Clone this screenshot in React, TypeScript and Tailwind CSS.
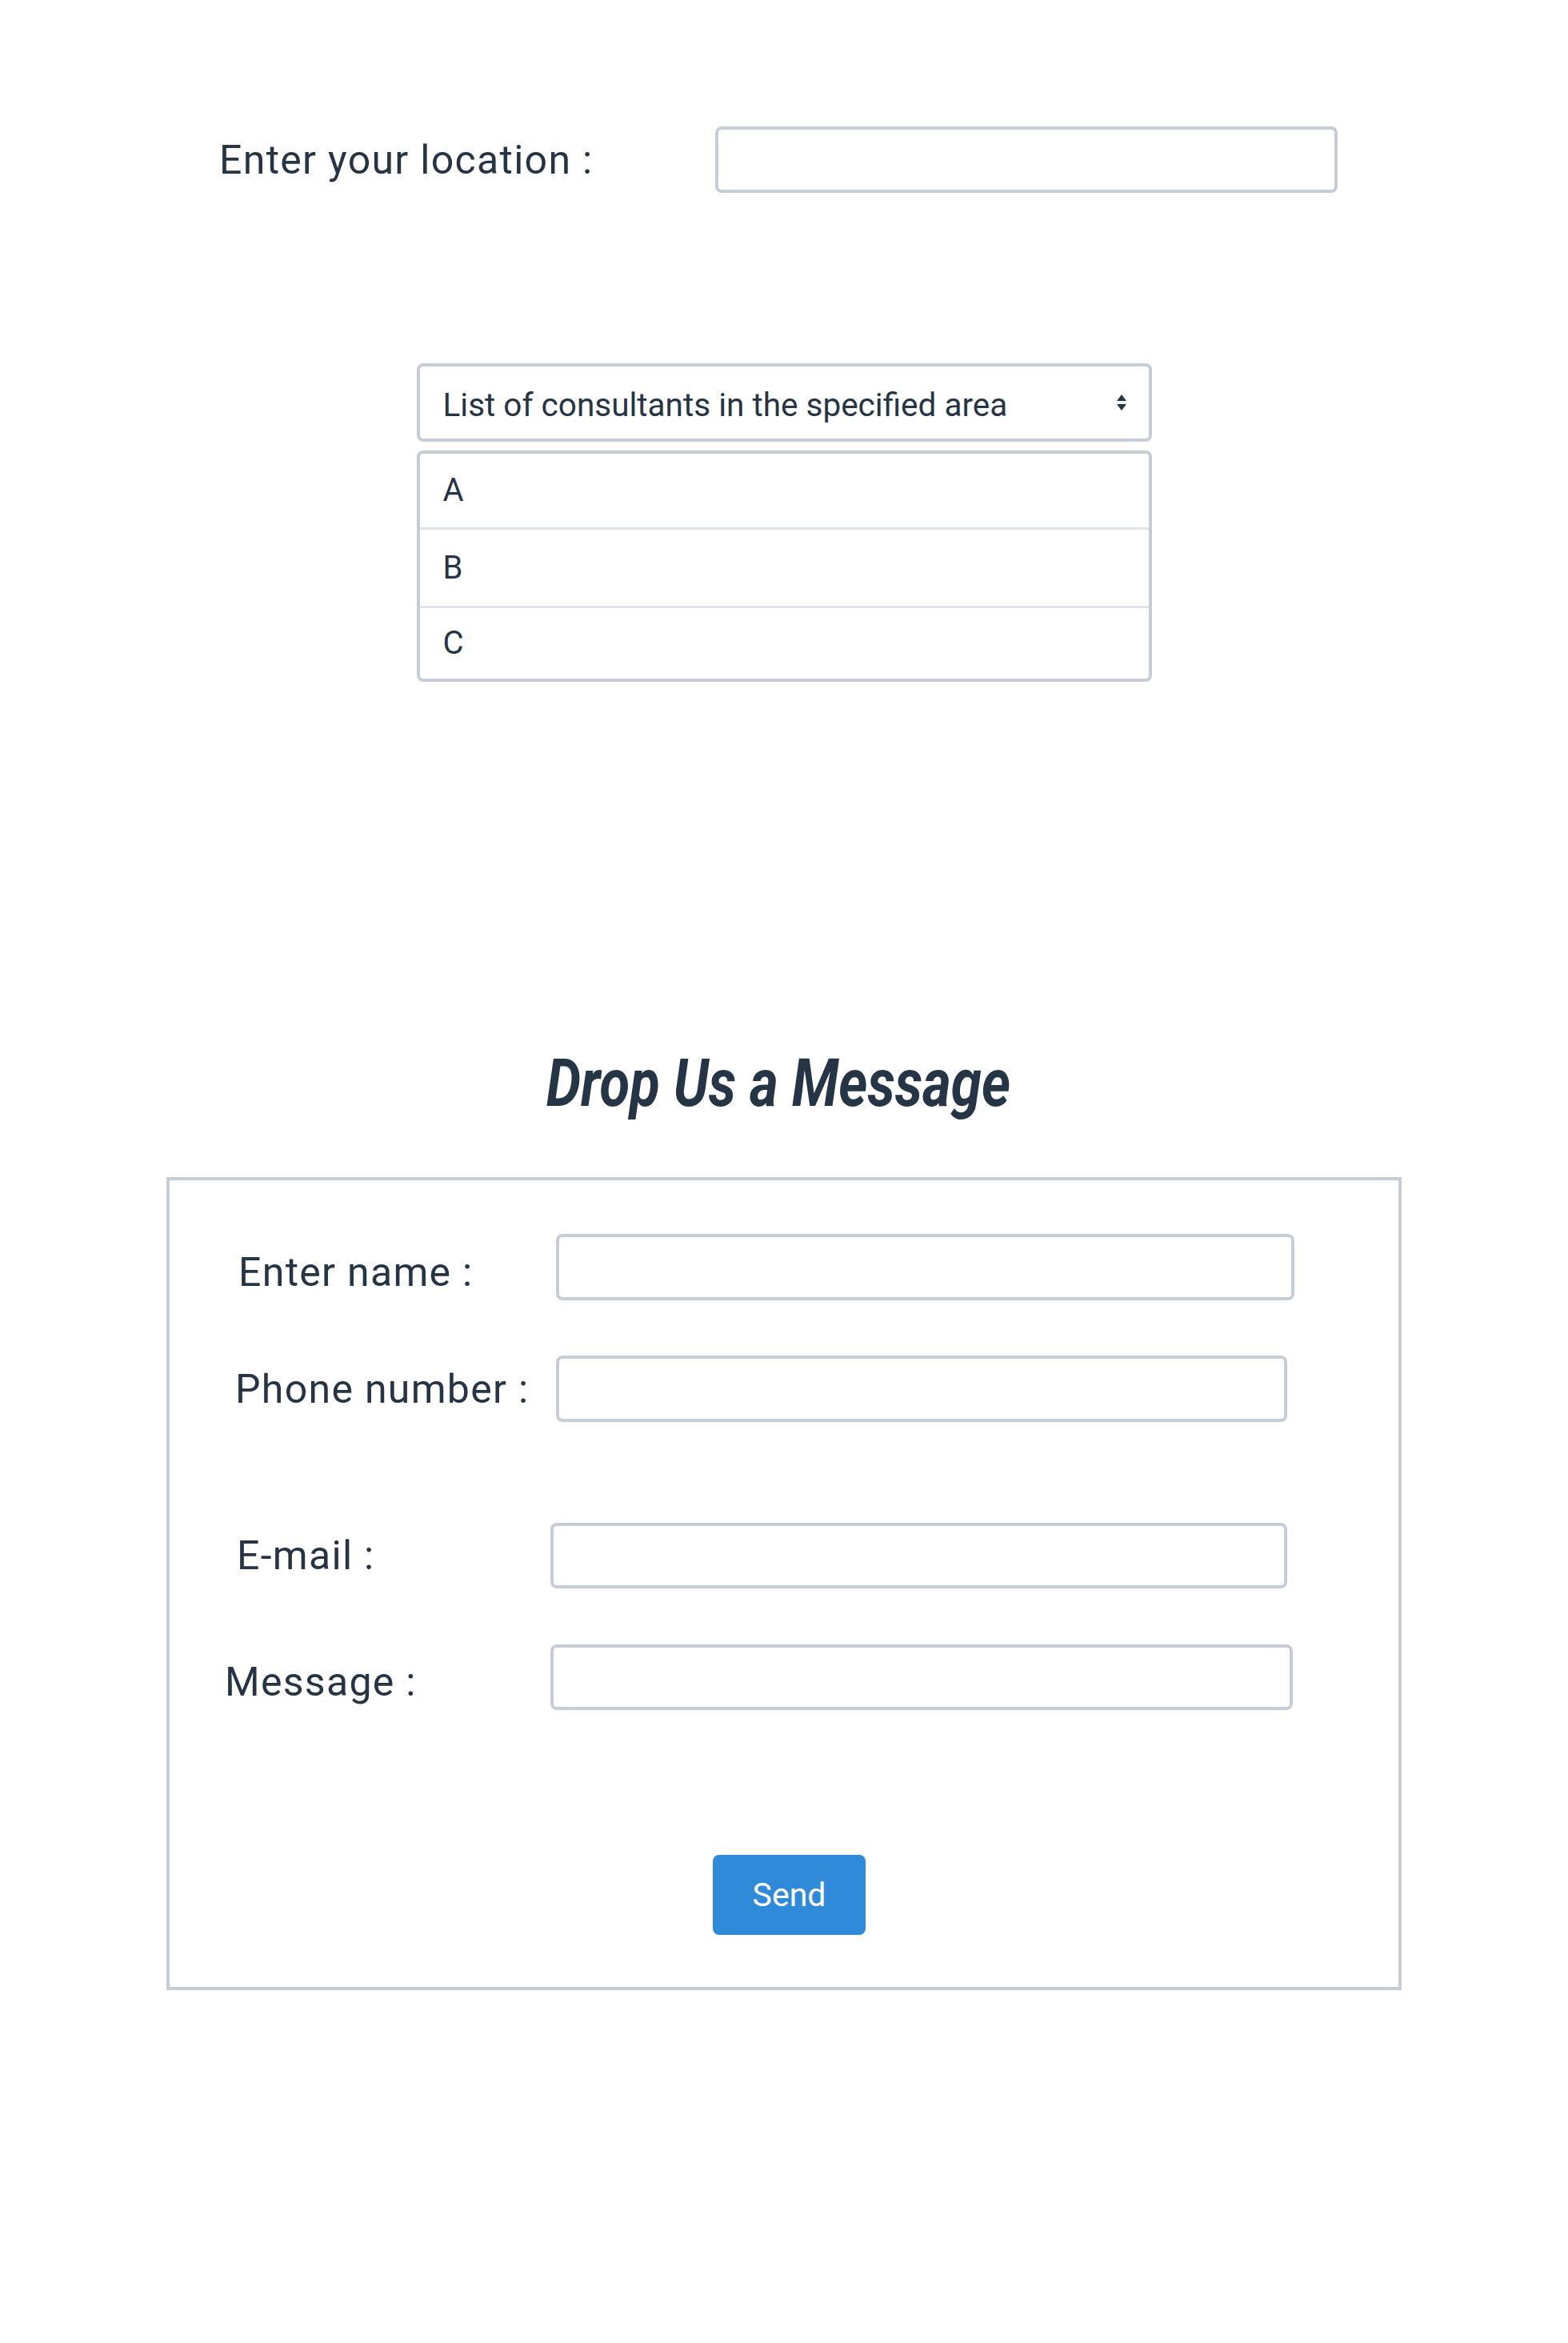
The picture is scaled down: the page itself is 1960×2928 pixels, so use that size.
import React from "react";

const font = { fontFamily: "Roboto, 'Liberation Sans', sans-serif" };

function Field({ label, labelPad, inputLeft, inputWidth, inputHeight, labelShift }: { label: string; labelPad: string; inputLeft: string; inputWidth: string; inputHeight: string; labelShift: string }) {
  return (
    <div className="flex items-center">
      <div className={`${inputLeft} ${labelPad} ${labelShift} shrink-0 text-[50px] leading-none tracking-[1.3px] text-[#263545]`}>{label}</div>
      <input className={`${inputWidth} ${inputHeight} rounded-[8px] border-4 border-[#c5ced7] bg-white outline-none`} />
    </div>
  );
}

export default function App() {
  return (
    <div className="min-h-[2928px] w-[1960px] bg-white text-[#263545]" style={font}>
      {/* location row */}
      <div className="flex items-center pl-[274px] pt-[158px]">
        <div className="w-[620px] shrink-0 text-[50px] leading-none tracking-[1.3px]">Enter your location :</div>
        <input className="h-[83px] w-[778px] rounded-[8px] border-4 border-[#c5ced7] bg-white outline-none" />
      </div>

      {/* select + list */}
      <div className="mx-auto mt-[213px] w-[919px]">
        <div className="flex h-[98px] items-center justify-between rounded-[8px] border-4 border-[#c5ced7] pl-[29px] pr-[26px]">
          <span className="pt-[6px] text-[40.5px] leading-none">List of consultants in the specified area</span>
          <svg width="16" height="24" viewBox="0 0 16 24">
            <path d="M8 2 L14 10 L2 10 Z" fill="#263545" />
            <path d="M8 22 L14 14 L2 14 Z" fill="#263545" />
          </svg>
        </div>
        <div className="mt-[11px] overflow-hidden rounded-[8px] border-4 border-[#c5ced7]">
          <div className="flex h-[95px] items-center border-b-[3px] border-[#dfe5ec] pl-[29px] text-[40px] leading-none">A</div>
          <div className="flex h-[98px] items-center border-b-[3px] border-[#dfe5ec] pl-[29px] text-[40px] leading-none">B</div>
          <div className="flex h-[88px] items-center pl-[29px] text-[40px] leading-none">C</div>
        </div>
      </div>

      {/* heading */}
      <div className="mt-[460px] flex justify-center pr-[14px]">
        <h2 className="inline-block scale-x-[0.82] text-[84px] font-bold italic leading-none text-[#263545]">Drop Us a Message</h2>
      </div>

      {/* form */}
      <div className="mx-auto mt-[75px] w-[1544px] border-4 border-[#c5ced7] pb-[65px] pt-[67px]">
        <Field label="Enter name :" labelPad="pl-[86px]" labelShift="pt-[12px]" inputLeft="w-[483px]" inputWidth="w-[923px]" inputHeight="h-[83px]" />
        <div className="mt-[69px]">
          <Field label="Phone number :" labelPad="pl-[82px]" labelShift="pt-[0px]" inputLeft="w-[483px]" inputWidth="w-[914px]" inputHeight="h-[83px]" />
        </div>
        <div className="mt-[126px]">
          <Field label="E-mail :" labelPad="pl-[84px]" labelShift="pt-[0px]" inputLeft="w-[476px]" inputWidth="w-[921px]" inputHeight="h-[82px]" />
        </div>
        <div className="mt-[70px]">
          <Field label="Message :" labelPad="pl-[69px]" labelShift="pt-[12px]" inputLeft="w-[476px]" inputWidth="w-[928px]" inputHeight="h-[82px]" />
        </div>
        <div className="mt-[181px] flex justify-center pl-[13px]">
          <button className="h-[100px] w-[191px] rounded-[8px] bg-[#2f8ad9] text-[41px] leading-none text-white">Send</button>
        </div>
      </div>
    </div>
  );
}
